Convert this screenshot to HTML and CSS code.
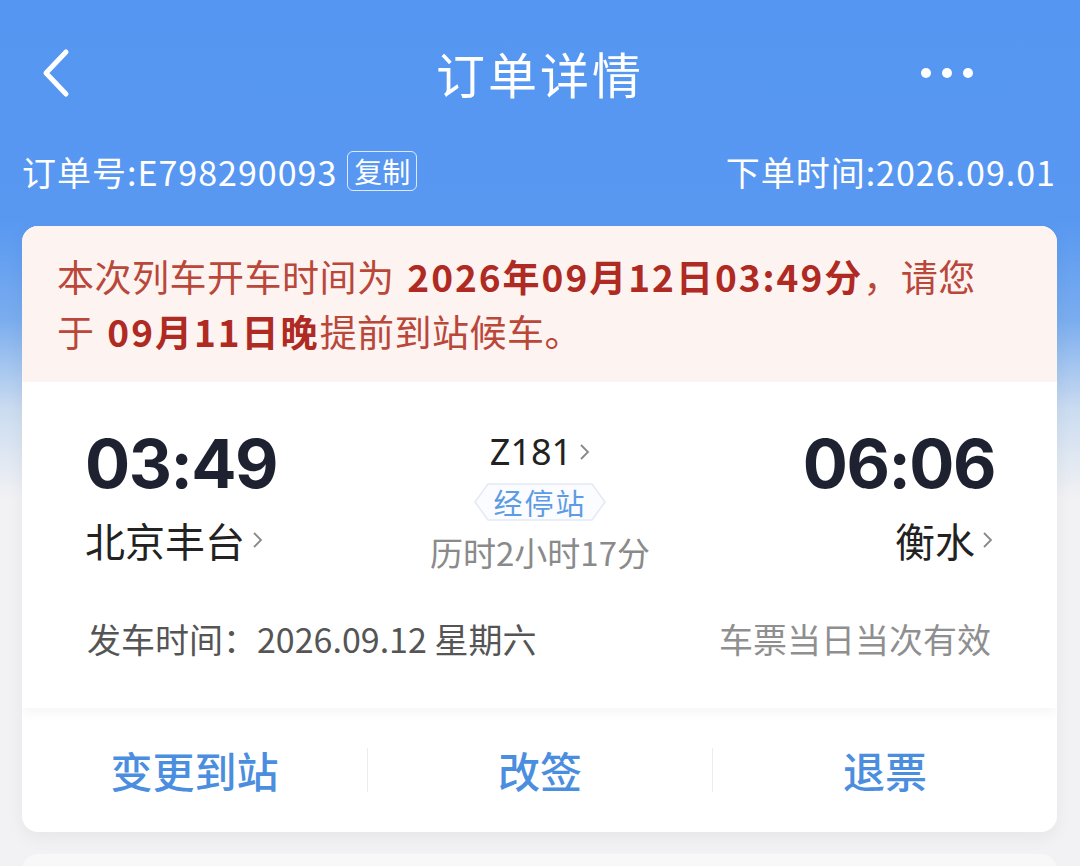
FILE: index.html
```html
<!DOCTYPE html>
<html lang="zh-CN">
<head>
    <meta charset="UTF-8">
    <meta name="viewport" content="width=device-width, initial-scale=1.0">
    <title>订单详情</title>
    <link rel="stylesheet" href="styles.css">
</head>
<body>
    <div class="page">
        <div class="nav-bar">
            <div class="nav-back">
                <svg width="40" height="50" viewBox="0 0 40 50">
                    <polyline points="30,4 10,25 30,46" fill="none" stroke="#fff" stroke-width="5" stroke-linecap="round" stroke-linejoin="round"/>
                </svg>
            </div>
            <div class="nav-title">订单详情</div>
            <div class="nav-more">
                <span class="dot"></span><span class="dot"></span><span class="dot"></span>
            </div>
        </div>

        <div class="order-row">
            <div class="order-no">订单号:E798290093<span class="copy-btn">复制</span></div>
            <div class="order-time">下单时间:2026.09.01</div>
        </div>

        <div class="ticket-card">
            <div class="notice">
                本次列车开车时间为 <b>2026年09月12日03:49分</b>，请您<br>于 <b>09月11日晚</b>提前到站候车。
            </div>

            <div class="ticket">
                <div class="trip">
                    <div class="stop">
                        <div class="time">03:49</div>
                        <div class="station">北京丰台<svg class="arrow" width="14" height="22" viewBox="0 0 14 22"><polyline points="3,4 10,11 3,18" fill="none" stroke="#888" stroke-width="1.8"/></svg></div>
                    </div>
                    <div class="middle">
                        <div class="train-no">Z181<svg class="arrow" width="14" height="22" viewBox="0 0 14 22"><polyline points="3,4 10,11 3,18" fill="none" stroke="#888" stroke-width="1.8"/></svg></div>
                        <div class="stops-badge">
                            <svg class="badge-bg" width="132" height="38" viewBox="0 0 132 38">
                                <polygon points="14,1 118,1 131,19 118,37 14,37 1,19" fill="#fbfcff" stroke="#e3e9f3" stroke-width="1.5"/>
                            </svg>
                            <span>经停站</span>
                        </div>
                        <div class="duration">历时2小时17分</div>
                    </div>
                    <div class="stop stop-end">
                        <div class="time">06:06</div>
                        <div class="station">衡水<svg class="arrow" width="14" height="22" viewBox="0 0 14 22"><polyline points="3,4 10,11 3,18" fill="none" stroke="#888" stroke-width="1.8"/></svg></div>
                    </div>
                </div>
                <div class="date-row">
                    <div class="depart-date">发车时间：2026.09.12 星期六</div>
                    <div class="valid">车票当日当次有效</div>
                </div>
            </div>

            <div class="actions">
                <div class="action">变更到站</div>
                <div class="action">改签</div>
                <div class="action">退票</div>
            </div>
        </div>

        <div class="next-card"></div>
    </div>
</body>
</html>
```

FILE: styles.css
```css
body {
    margin: 0;
    font-family: "Noto Sans CJK SC", "Noto Sans", sans-serif;
    background: #f2f2f4;
}
.page {
    width: 1080px;
    height: 866px;
    overflow: hidden;
    background: linear-gradient(#5596f2 0, #5898f1 220px, #7aadef 320px, #cbdcf0 410px, #f2f2f4 500px);
}
.nav-bar {
    display: flex;
    align-items: center;
    justify-content: space-between;
    height: 90px;
    padding: 28px 0 0;
    position: relative;
}
.nav-back {
    width: 40px;
    height: 50px;
    margin-left: 36px;
}
.nav-back svg {
    display: block;
}
.nav-title {
    position: absolute;
    left: 0;
    right: 0;
    top: 28px;
    line-height: 90px;
    text-align: center;
    color: #fff;
    font-size: 49px;
    letter-spacing: 3px;
}
.nav-more {
    display: flex;
    gap: 11px;
    margin-right: 107px;
}
.dot {
    width: 10px;
    height: 10px;
    border-radius: 50%;
    background: #fff;
}
.order-row {
    display: flex;
    justify-content: space-between;
    align-items: center;
    margin-top: 27px;
    padding: 0 24px 0 22px;
    height: 52px;
    color: #fff;
    font-size: 34px;
    letter-spacing: 1px;
}
.order-no {
    display: flex;
    align-items: center;
}
.copy-btn {
    margin-left: 10px;
    border: 1.5px solid rgba(255, 255, 255, 0.8);
    border-radius: 6px;
    font-size: 28px;
    line-height: 38px;
    padding: 0 6px;
    letter-spacing: 0;
}
.ticket-card {
    margin: 29px 23px 0 22px;
    background: #fff;
    border-radius: 16px;
    overflow: hidden;
    box-shadow: 0 6px 18px rgba(0, 0, 0, 0.05);
}
.notice {
    background: #fdf3f0;
    color: #b9473a;
    font-size: 37px;
    line-height: 55px;
    letter-spacing: 0.5px;
    word-spacing: 4px;
    padding: 23px 40px 23px 35px;
}
.notice b {
    color: #ae2a22;
    font-weight: 700;
    letter-spacing: 2px;
}
.ticket {
    padding: 40px 62px 0 63px;
    height: 286px;
    box-shadow: 0 6px 10px rgba(0, 0, 0, 0.035);
    position: relative;
}
.trip {
    display: flex;
    justify-content: space-between;
}
.stop {
    width: 260px;
}
.stop-end {
    display: flex;
    flex-direction: column;
    align-items: flex-end;
}
.time {
    font-family: Inter, "Liberation Sans", sans-serif;
    font-weight: 700;
    font-size: 67px;
    line-height: 84px;
    letter-spacing: -1.5px;
    color: #1d2130;
}
.station {
    display: flex;
    align-items: center;
    font-size: 40px;
    line-height: 56px;
    margin-top: 6px;
    color: #222;
}
.arrow {
    margin-left: 6px;
}
.middle {
    display: flex;
    flex-direction: column;
    align-items: center;
    padding-top: 8px;
}
.train-no {
    display: flex;
    align-items: center;
    font-family: "Noto Sans", sans-serif;
    font-size: 36px;
    line-height: 44px;
    color: #222;
    padding-left: 2px;
}
.stops-badge {
    position: relative;
    width: 132px;
    height: 38px;
    margin-top: 9px;
    display: flex;
    align-items: center;
    justify-content: center;
}
.badge-bg {
    position: absolute;
    left: 0;
    top: 0;
}
.stops-badge span {
    position: relative;
    color: #5d9be4;
    font-size: 29px;
    letter-spacing: 2px;
}
.duration {
    margin-top: 9px;
    font-size: 33px;
    line-height: 44px;
    color: #8a8a8a;
}
.date-row {
    display: flex;
    justify-content: space-between;
    margin-top: 43px;
    font-size: 34px;
    line-height: 44px;
    color: #555;
    padding-left: 2px;
    padding-right: 4px;
}
.valid {
    color: #8f8f8f;
}
.actions {
    display: grid;
    grid-template-columns: 1fr 1fr 1fr;
    height: 124px;
    align-items: center;
}
.action {
    text-align: center;
    color: #4b8ee0;
    font-size: 42px;
    font-weight: 500;
    line-height: 44px;
    border-left: 1.5px solid #ececec;
}
.action:first-child {
    border-left: none;
}
.next-card {
    margin: 22px 23px 0 22px;
    height: 60px;
    background: #f8f8f9;
    border-radius: 16px;
}
```
